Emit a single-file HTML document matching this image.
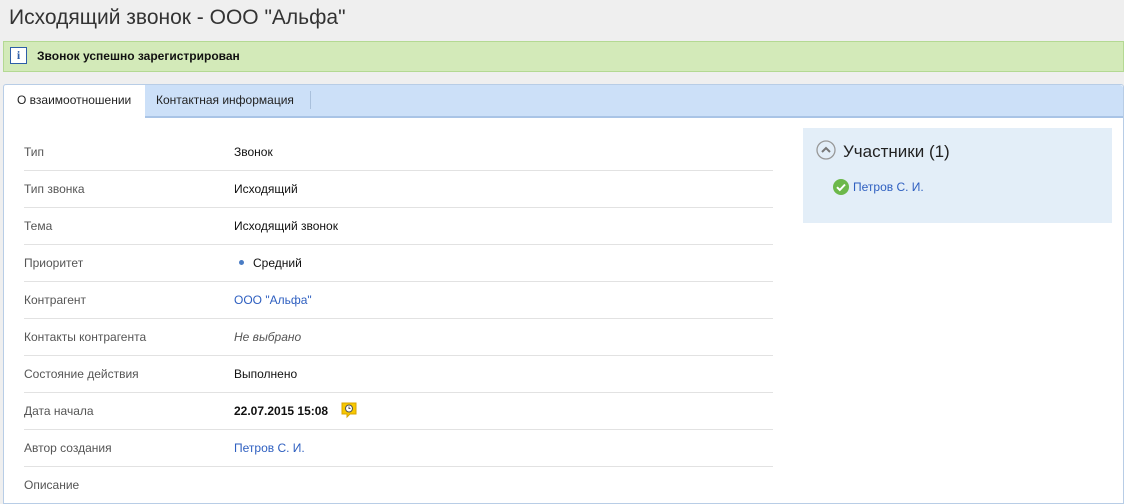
<!DOCTYPE html><html><head><meta charset="utf-8"><style>
body{margin:0;width:1124px;height:501px;overflow:hidden;background:#efefef;font-family:"Liberation Sans",Arial,sans-serif;position:relative}
.t{position:absolute;left:9px;top:6px;font-size:21px;color:#333}
.msg{position:absolute;left:3px;top:41px;width:1121px;height:31px;background:#d3eab9;border:1px solid #b4d993;box-sizing:border-box}
.msg b{position:absolute;left:33px;top:7px;font-size:12px;color:#111}
.ic{position:absolute;left:6px;top:5px;width:15px;height:15px;border:1px solid #2d5ea8;background:#fff;color:#2d5ea8;font:bold 12px "Liberation Serif",serif;text-align:center;line-height:15px}
.panel{position:absolute;left:3px;top:84px;width:1121px;height:420px;background:#fff;border:1px solid #b8cde6;border-radius:3px 3px 0 0;box-sizing:border-box}
.th{position:absolute;left:0;top:0;right:0;height:31px;background:#cce0f8;border-bottom:2px solid #a9c4e6;border-radius:3px 3px 0 0}
.tab{position:absolute;font-size:12px;color:#222;top:8px}
.tab1{position:absolute;left:0;top:0;width:141px;height:33px;background:#fff;border-radius:3px 0 0 0}
.sep{position:absolute;left:306px;top:6px;width:1px;height:18px;background:#a9c0dc}
.row{position:absolute;left:24px;width:749px;height:37px;border-bottom:1px solid #e2e2e2;font-size:12px}
.row .l{position:absolute;left:0;top:12px;color:#555}
.row .v{position:absolute;left:210px;top:12px;color:#111}
a{color:#2e5fc0;text-decoration:none}
.side{position:absolute;left:803px;top:128px;width:309px;height:95px;background:#e3eef8}
</style></head><body>
<div class="t">Исходящий звонок - ООО "Альфа"</div>
<div class="msg"><div class="ic">i</div><b>Звонок успешно зарегистрирован</b></div>
<div class="panel"><div class="th"></div><div class="tab1"></div>
<div class="tab" style="left:13px">О взаимоотношении</div>
<div class="tab" style="left:152px">Контактная информация</div><div class="sep"></div></div>
<div class="row" style="top:133px"><span class="l">Тип</span><span class="v">Звонок</span></div>
<div class="row" style="top:170px"><span class="l">Тип звонка</span><span class="v">Исходящий</span></div>
<div class="row" style="top:207px"><span class="l">Тема</span><span class="v">Исходящий звонок</span></div>
<div class="row" style="top:244px"><span class="l">Приоритет</span><span class="v"><span style="display:inline-block;width:5px;height:5px;border-radius:50%;background:#4a7cc4;margin:0 9px 2px 5px"></span>Средний</span></div>
<div class="row" style="top:281px"><span class="l">Контрагент</span><span class="v"><a>ООО "Альфа"</a></span></div>
<div class="row" style="top:318px"><span class="l">Контакты контрагента</span><span class="v" style="color:#555;font-style:italic">Не выбрано</span></div>
<div class="row" style="top:355px"><span class="l">Состояние действия</span><span class="v">Выполнено</span></div>
<div class="row" style="top:392px"><span class="l">Дата начала</span><span class="v" style="font-weight:bold">22.07.2015 15:08</span>
<svg style="position:absolute;left:317px;top:10px" width="16" height="17" viewBox="0 0 16 17"><path d="M1 1h14v11H9l-3 3v-3H1z" fill="#f7c800" stroke="#d9a400"/><circle cx="8" cy="6.5" r="3.5" fill="#fff" stroke="#555"/><path d="M8 4.5v2h1.5" stroke="#555" fill="none"/></svg></div>
<div class="row" style="top:429px"><span class="l">Автор создания</span><span class="v"><a>Петров С. И.</a></span></div>
<div class="row" style="top:466px;border:none"><span class="l">Описание</span></div>
<div class="side">
<svg style="position:absolute;left:13px;top:12px" width="20" height="20"><circle cx="10" cy="10" r="9" fill="none" stroke="#999" stroke-width="1.3"/><path d="M6 12l4-4 4 4" fill="none" stroke="#777" stroke-width="2"/></svg>
<div style="position:absolute;left:40px;top:14px;font-size:17px;color:#222">Участники (1)</div>
<svg style="position:absolute;left:30px;top:51px" width="16" height="16"><circle cx="8" cy="8" r="8" fill="#6cb84a"/><path d="M4 8.2l2.8 2.8L12 5.5" stroke="#fff" stroke-width="2" fill="none"/></svg>
<a style="position:absolute;left:50px;top:52px;font-size:12px">Петров С. И.</a></div>
</body></html>
